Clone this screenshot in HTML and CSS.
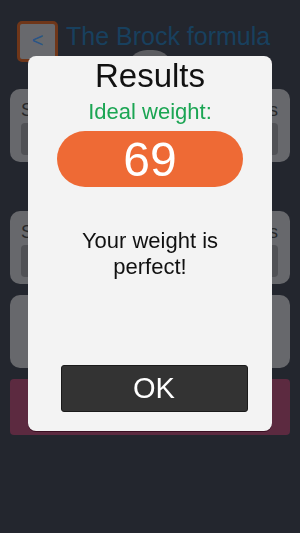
FILE: index.html
```html
<!DOCTYPE html>
<html>
<head>
<meta charset="utf-8">
<link rel="stylesheet" href="styles.css">
</head>
<body>
<div class="app">
  <header class="header">
    <div class="back">&lt;</div>
    <h1 class="title">The Brock formula</h1>
  </header>
  <div class="knob"></div>
  <section class="card">
    <div class="label">Set your weight in kilograms</div>
    <div class="input"></div>
  </section>
  <section class="card card-two">
    <div class="label">Set your height in centimeters</div>
    <div class="input"></div>
  </section>
  <section class="card card-plain"></section>
  <section class="card card-action"></section>
</div>

<div class="overlay">
  <div class="modal">
    <h2 class="modal-title">Results</h2>
    <div class="modal-sub">Ideal weight:</div>
    <div class="pill">69</div>
    <p class="message">Your weight is perfect!</p>
    <button class="ok">OK</button>
  </div>
</div>
</body>
</html>
```

FILE: styles.css
```css
* { box-sizing: border-box; }
html, body {
  margin: 0;
  padding: 0;
  height: 100%;
}
body {
  background: #23262e;
  font-family: "Liberation Sans", Arial, sans-serif;
  overflow: hidden;
}
.app {
  display: flex;
  flex-direction: column;
  padding: 21px 10px 0 10px;
}
.header {
  display: flex;
  align-items: flex-start;
  gap: 8px;
  padding-left: 7px;
  height: 41px;
}
.back {
  width: 41px;
  height: 41px;
  border: 3px solid #6f3619;
  border-radius: 5px;
  background: #68696d;
  color: #2a5586;
  font-size: 20px;
  display: flex;
  align-items: center;
  justify-content: center;
  padding-bottom: 2px;
}
.title {
  margin: 0;
  font-weight: normal;
  font-size: 25px;
  line-height: 30px;
  color: #18405e;
  white-space: nowrap;
}
.knob {
  align-self: center;
  width: 46px;
  height: 20px;
  margin-top: -12px;
  border-radius: 23px 23px 0 0;
  background: #5c5d61;
}
.card {
  background: #67686c;
  border-radius: 10px;
  height: 73px;
  margin-top: 19px;
  padding: 11px 12px 0 11px;
}
.card-two { margin-top: 49px; }
.card-plain { margin-top: 11px; }
.card-action {
  margin-top: 11px;
  height: 56px;
  background: #5c2a40;
  border-radius: 4px;
}
.label {
  font-size: 18px;
  color: #28282a;
  text-align: justify;
  text-align-last: justify;
  white-space: nowrap;
  overflow: hidden;
  line-height: 20px;
}
.input {
  margin-top: 3px;
  height: 32px;
  background: #505155;
  border-radius: 4px;
}
.overlay {
  position: fixed;
  inset: 0;
  display: flex;
  justify-content: center;
  align-items: flex-start;
  padding-top: 56px;
}
.modal {
  width: 244px;
  height: 375px;
  background: #f3f3f3;
  border-radius: 8px;
  box-shadow: 0 1px 0 #3a0f22;
  display: flex;
  flex-direction: column;
  align-items: center;
}
.modal-title {
  margin: 1px 0 0 0;
  font-weight: normal;
  font-size: 33px;
  line-height: 38px;
  color: #111;
}
.modal-sub {
  margin-top: 5px;
  font-size: 22px;
  line-height: 24px;
  color: #1ba553;
}
.pill {
  margin-top: 7px;
  width: 186px;
  height: 56px;
  border-radius: 28px;
  background: #ee6a35;
  color: #fff;
  font-size: 48px;
  display: flex;
  align-items: center;
  justify-content: center;
}
.message {
  margin: 41px 0 0 0;
  padding: 0 36px;
  font-size: 22px;
  line-height: 26px;
  text-align: center;
  color: #111;
}
.ok {
  margin-top: auto;
  margin-bottom: 19px;
  margin-left: 8px;
  width: 187px;
  height: 47px;
  background: #333333;
  border: 1px solid #1a1a1a;
  border-radius: 3px;
  color: #fff;
  font-family: inherit;
  font-size: 29px;
  padding: 0;
}
```
